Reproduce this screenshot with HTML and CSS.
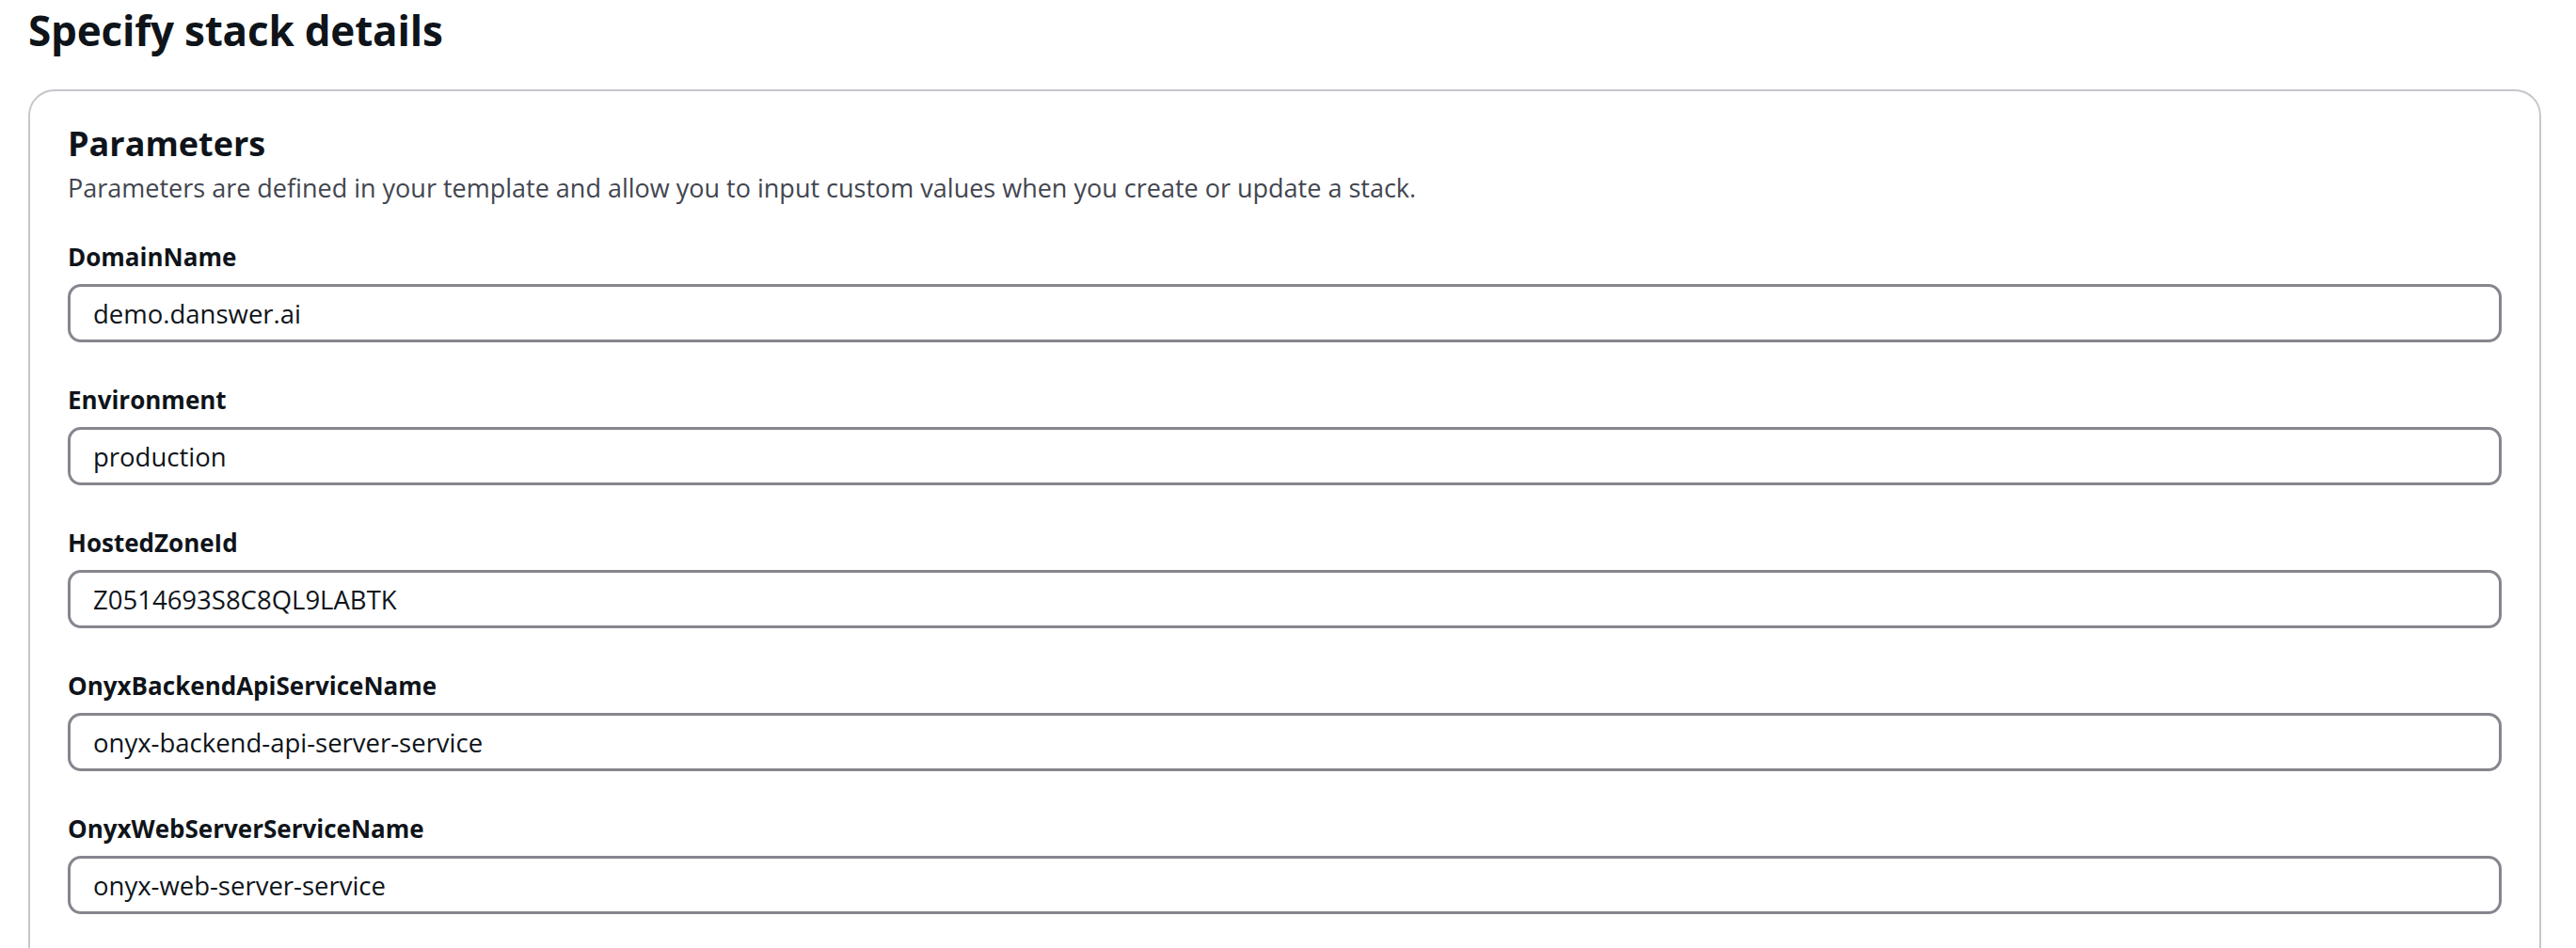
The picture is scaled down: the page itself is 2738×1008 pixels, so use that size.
FILE: index.html
```html
<!DOCTYPE html>
<html lang="en">
<head>
<meta charset="utf-8">
<title>Specify stack details</title>
<link rel="stylesheet" href="styles.css">
</head>
<body>
<main class="page">
  <h1 class="page-title">Specify stack details</h1>
  <section class="container">
    <header class="container-header">
      <h2 class="container-title">Parameters</h2>
      <p class="container-desc">Parameters are defined in your template and allow you to input custom values when you create or update a stack.</p>
    </header>
    <div class="fields">
      <div class="field">
        <label class="field-label" for="f1">DomainName</label>
        <input class="field-input" id="f1" type="text" value="demo.danswer.ai">
      </div>
      <div class="field">
        <label class="field-label" for="f2">Environment</label>
        <input class="field-input" id="f2" type="text" value="production">
      </div>
      <div class="field">
        <label class="field-label" for="f3">HostedZoneId</label>
        <input class="field-input" id="f3" type="text" value="Z0514693S8C8QL9LABTK">
      </div>
      <div class="field">
        <label class="field-label" for="f4">OnyxBackendApiServiceName</label>
        <input class="field-input" id="f4" type="text" value="onyx-backend-api-server-service">
      </div>
      <div class="field">
        <label class="field-label" for="f5">OnyxWebServerServiceName</label>
        <input class="field-input" id="f5" type="text" value="onyx-web-server-service">
      </div>
    </div>
  </section>
</main>
</body>
</html>
```

FILE: styles.css
```css
html, body {
  margin: 0;
  padding: 0;
  background: #ffffff;
}

body {
  font-family: "Open Sans", "Noto Sans", "Liberation Sans", sans-serif;
  color: #0f141a;
  overflow: hidden;
}

.page {
  padding: 0 37px 0 30px;
}

.page-title {
  margin: 0;
  padding-top: 6px;
  height: 95px;
  box-sizing: border-box;
  font-size: 44px;
  line-height: 52px;
  font-weight: 700;
  color: #0f141a;
  letter-spacing: -0.2px;
}

.container {
  border: 2px solid #c6c6cd;
  border-radius: 28px;
  padding: 34px 40px 60px 40px;
  min-height: 1000px;
  box-sizing: border-box;
}

.container-header {
  display: flex;
  flex-direction: column;
  gap: 7px;
}

.container-title {
  margin: 0;
  font-size: 36px;
  line-height: 44px;
  font-weight: 700;
  color: #0f141a;
}

.container-desc {
  margin: 0;
  font-size: 27px;
  line-height: 35px;
  color: #424650;
}

.fields {
  display: flex;
  flex-direction: column;
  gap: 44px;
  margin-top: 39px;
}

.field {
  display: flex;
  flex-direction: column;
  gap: 11px;
}

.field-label {
  font-size: 26px;
  line-height: 35px;
  font-weight: 700;
  color: #0f141a;
}

.field-input {
  display: block;
  width: 100%;
  box-sizing: border-box;
  height: 62px;
  margin: 0;
  padding: 0 24px;
  border: 3px solid #85868e;
  border-radius: 14px;
  background: #ffffff;
  font-family: inherit;
  font-size: 27.5px;
  color: #0f141a;
  outline: none;
}
```
